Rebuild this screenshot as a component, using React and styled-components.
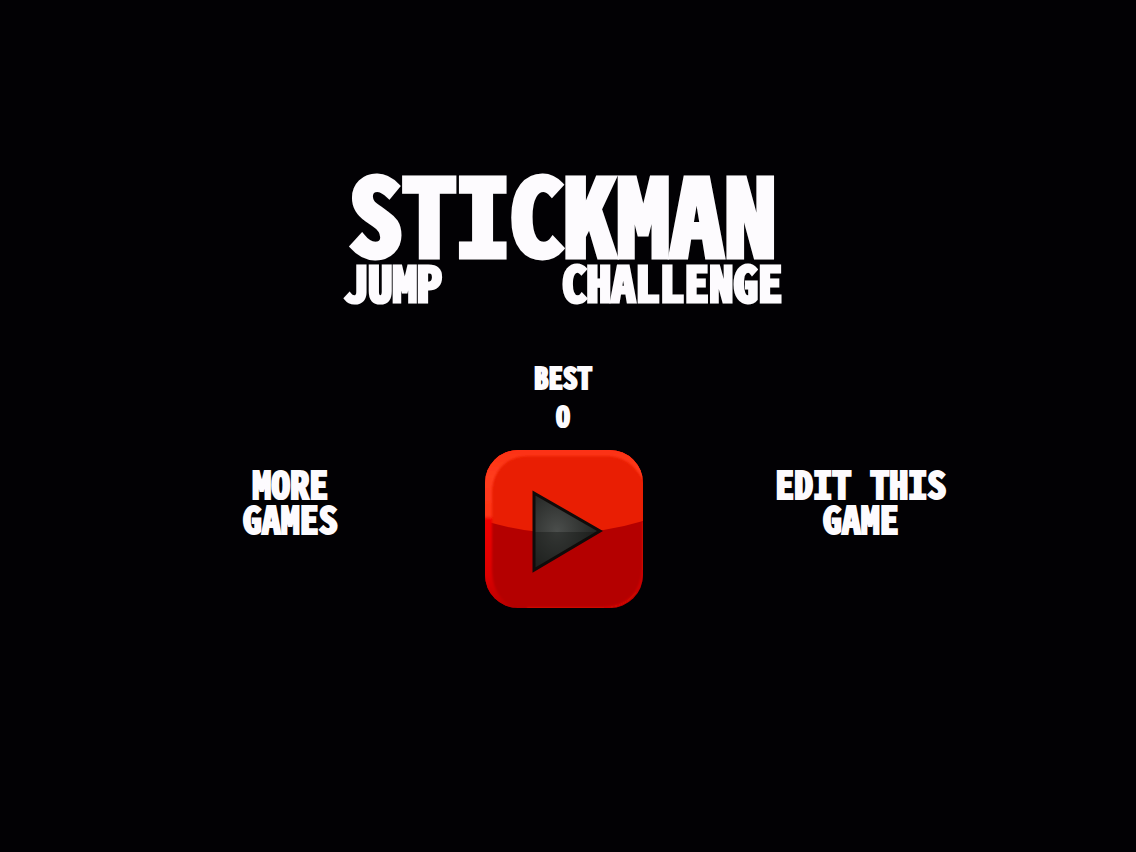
import React from 'react';
import styled, { createGlobalStyle } from "styled-components";

export default function App() {
  return <>
    <GlobalStyle />
    <Screen>
      <Header>
        <Title>STICKMAN</Title>
        <Subtitle>
          <span>JUMP</span>
          <span>CHALLENGE</span>
        </Subtitle>
      </Header>
      <Score>
        <span>BEST</span>
        <span>0</span>
      </Score>
      <Menu>
        <MenuLink href="#more">MORE<br />GAMES</MenuLink>
        <PlayButton type="button" aria-label="Play">
          <PlayIcon />
        </PlayButton>
        <MenuLink href="#edit">EDIT THIS<br />GAME</MenuLink>
      </Menu>
    </Screen>
  </>
};

function PlayIcon() {
  return (
    <svg viewBox="0 0 158 158" aria-hidden="true">
      <defs>
        <clipPath id="tile">
          <rect width="158" height="158" rx="33" />
        </clipPath>
        <linearGradient id="edge" x1="0" y1="0" x2="0" y2="1">
          <stop offset="0" stopColor="#fb3010" />
          <stop offset="0.2" stopColor="#ff3c1e" />
          <stop offset="0.44" stopColor="#ff3417" />
          <stop offset="0.46" stopColor="#f00400" />
          <stop offset="0.8" stopColor="#dc0000" />
          <stop offset="1" stopColor="#b80000" />
        </linearGradient>
        <radialGradient id="arrow" cx="0.35" cy="0.5" r="0.6">
          <stop offset="0" stopColor="#4b4e4c" />
          <stop offset="1" stopColor="#242624" />
        </radialGradient>
        <filter id="soft" x="-20%" y="-20%" width="140%" height="140%">
          <feGaussianBlur stdDeviation="1.2" />
        </filter>
      </defs>
      <g clipPath="url(#tile)">
        <rect width="158" height="158" fill="#b40000" />
        <path d="M0 0H158V71Q79 95 0 71Z" fill="#e91e03" />
        <path
          d="M-6 -6H164V40C152 16 140 6 120 6H44C20 6 7 22 7 44V118C7 138 14 150 30 158H-6Z"
          fill="url(#edge)"
          filter="url(#soft)"
        />
        <path
          d="M158 72V118C158 142 142 158 118 158H42"
          fill="none"
          stroke="#d60800"
          strokeWidth="2"
          filter="url(#soft)"
        />
      </g>
      <path d="M49 43V120L115 81Z" fill="url(#arrow)" />
      <path d="M49 82H115L49 120Z" fill="#111312" opacity="0.4" />
      <path d="M49 43V120L115 81Z" fill="none" stroke="#100b0a" strokeWidth="3" />
    </svg>
  );
}

const GlobalStyle = createGlobalStyle`
  * {
    box-sizing: border-box;
  }
  body {
    margin: 0;
    background-color: #020104;
    color: #fdfbfe;
    font-family: "Noto Sans Mono CJK SC", "DejaVu Sans Mono", monospace;
    font-weight: 700;
  }
`;

const Screen = styled.main`
  min-height: 100vh;
  display: flex;
  flex-direction: column;
  align-items: center;
  padding: 169px 10px 80px 0;
`;

const Header = styled.header`
  display: flex;
  flex-direction: column;
  min-width: 39%;
`;

const Title = styled.h1`
  margin: 0;
  font-size: 107px;
  line-height: 84px;
  text-align: center;
  -webkit-text-stroke: 5px currentColor;
`;

const Subtitle = styled.div`
  display: flex;
  justify-content: space-between;
  font-size: 49px;
  line-height: 56px;
  -webkit-text-stroke: 3px currentColor;
`;

const Score = styled.div`
  display: flex;
  flex-direction: column;
  align-items: center;
  margin-top: 48px;
  font-size: 29px;
  line-height: 38px;
  -webkit-text-stroke: 2px currentColor;
`;

const Menu = styled.nav`
  display: grid;
  grid-template-columns: 116px 158px 162px;
  justify-content: space-between;
  justify-items: center;
  align-items: start;
  width: 63%;
  margin: 17px 0 0 48px;
`;

const MenuLink = styled.a`
  margin-top: 15px;
  color: inherit;
  font-size: 38px;
  line-height: 35px;
  text-align: center;
  text-decoration: none;
  white-space: nowrap;
  -webkit-text-stroke: 2px currentColor;
`;

const PlayButton = styled.button`
  width: 158px;
  height: 158px;
  padding: 0;
  border: 0;
  background: none;
  cursor: pointer;
  svg {
    display: block;
    width: 100%;
    height: 100%;
  }
`;
